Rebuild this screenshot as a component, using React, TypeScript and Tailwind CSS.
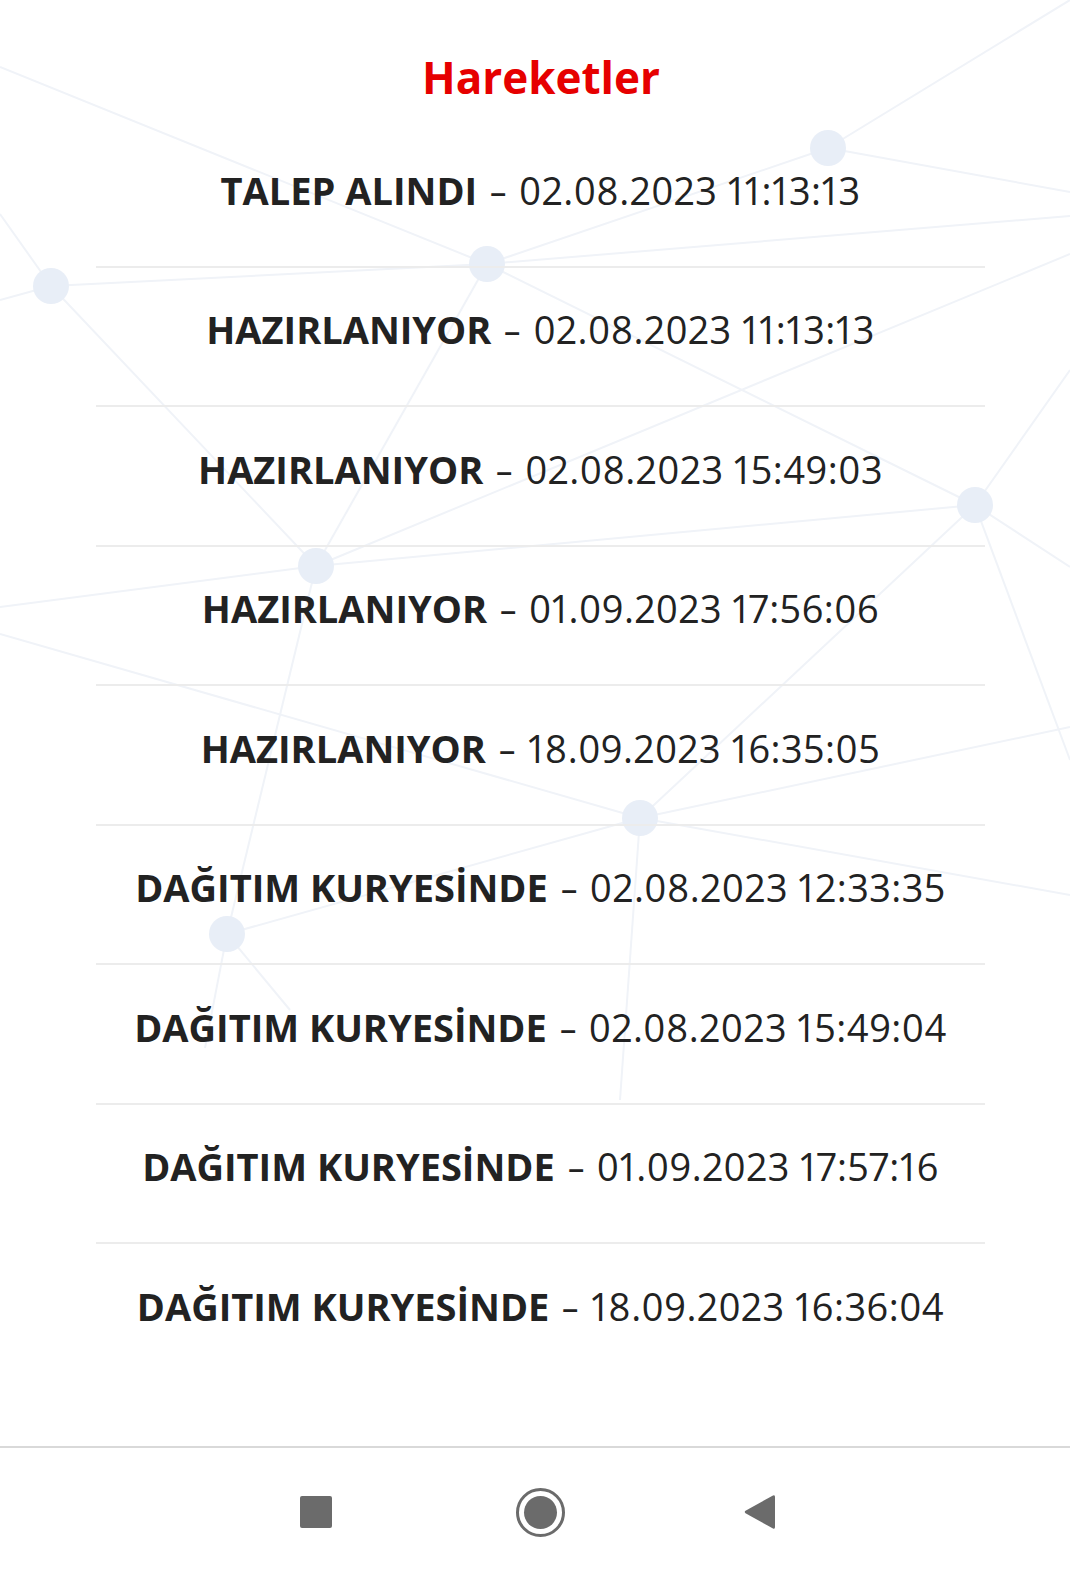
import type { ReactNode } from "react";

type Movement = { status: string; at: string };

const MOVEMENTS: Movement[] = [
  { status: "TALEP ALINDI", at: "02.08.2023 11:13:13" },
  { status: "HAZIRLANIYOR", at: "02.08.2023 11:13:13" },
  { status: "HAZIRLANIYOR", at: "02.08.2023 15:49:03" },
  { status: "HAZIRLANIYOR", at: "01.09.2023 17:56:06" },
  { status: "HAZIRLANIYOR", at: "18.09.2023 16:35:05" },
  { status: "DAĞITIM KURYESİNDE", at: "02.08.2023 12:33:35" },
  { status: "DAĞITIM KURYESİNDE", at: "02.08.2023 15:49:04" },
  { status: "DAĞITIM KURYESİNDE", at: "01.09.2023 17:57:16" },
  { status: "DAĞITIM KURYESİNDE", at: "18.09.2023 16:36:04" },
];

// faint "network" backdrop: nodes + the lines between them
const NODES: [number, number][] = [
  [51, 286],
  [487, 264],
  [828, 148],
  [975, 505],
  [316, 566],
  [640, 818],
  [227, 934],
];

const LINKS: [number, number, number, number][] = [
  [0, 67, 487, 264],
  [0, 214, 51, 286],
  [0, 300, 51, 286],
  [51, 286, 487, 264],
  [51, 286, 316, 566],
  [487, 264, 316, 566],
  [487, 264, 828, 148],
  [487, 264, 975, 505],
  [487, 264, 1070, 216],
  [828, 148, 1070, 0],
  [828, 148, 1070, 192],
  [0, 607, 316, 566],
  [316, 566, 975, 505],
  [316, 566, 1070, 254],
  [0, 634, 640, 818],
  [316, 566, 227, 934],
  [640, 818, 975, 505],
  [640, 818, 1070, 727],
  [640, 818, 1070, 895],
  [640, 818, 620, 1100],
  [227, 934, 640, 818],
  [227, 934, 205, 1048],
  [227, 934, 290, 1010],
  [975, 505, 1070, 370],
  [975, 505, 1070, 567],
  [975, 505, 1070, 760],
];

function NetworkBackdrop() {
  return (
    <svg
      className="pointer-events-none absolute inset-0 h-full w-full"
      viewBox="0 0 1070 1446"
      preserveAspectRatio="none"
      aria-hidden="true"
    >
      {LINKS.map(([x1, y1, x2, y2], i) => (
        <line key={i} x1={x1} y1={y1} x2={x2} y2={y2} stroke="#f0f3f8" strokeWidth={2} />
      ))}
      {NODES.map(([cx, cy], i) => (
        <circle key={i} cx={cx} cy={cy} r={18} fill="#e8eef7" />
      ))}
    </svg>
  );
}

function NavButton({ children }: { children: ReactNode }) {
  return <div className="flex items-center justify-center">{children}</div>;
}

export default function App() {
  return (
    <div className="flex min-h-[1576px] w-full flex-col bg-white font-['Open_Sans',sans-serif] text-[#222222]">
      <main className="relative flex-1 overflow-hidden">
        <NetworkBackdrop />
        <div className="relative pt-[55px]">
          <h1 className="pl-[12px] text-center text-[44px] font-bold leading-[44px] text-[#e60000]">
            Hareketler
          </h1>
          <ul className="ml-[96px] mr-[85px] mt-[29px]">
            {MOVEMENTS.map((m, i) => (
              <li
                key={i}
                className="border-b-2 border-[#ececec] pb-[57px] pt-[42.5px] text-center text-[38px] leading-[38px] last:border-b-0"
              >
                <span className="font-bold">{m.status}</span>{" "}
                <span className="mx-[5px] inline-block scale-x-[1.5] font-normal">-</span>{" "}
                <span className="font-normal tracking-[0.5px] proportional-nums">{m.at}</span>
              </li>
            ))}
          </ul>
        </div>
      </main>

      <nav className="flex h-[130px] items-center border-t-2 border-[#d9d9d9] bg-white pl-[300px]">
        <NavButton>
          <div className="h-[32px] w-[32px] rounded-[2px] bg-[#6b6b6b]" />
        </NavButton>
        <div className="ml-[184px]">
          <NavButton>
            <div className="flex h-[49px] w-[49px] items-center justify-center rounded-full border-[3px] border-[#6b6b6b]">
              <div className="h-[33px] w-[33px] rounded-full bg-[#6b6b6b]" />
            </div>
          </NavButton>
        </div>
        <div className="ml-[179px]">
          <NavButton>
            <svg width="31" height="36" viewBox="0 0 31 36" aria-hidden="true">
              <path
                d="M29 1.5 Q31 0.5 31 3 L31 33 Q31 35.5 29 34.5 L1.5 19.2 Q0 18 1.5 16.8 Z"
                fill="#6b6b6b"
              />
            </svg>
          </NavButton>
        </div>
      </nav>
    </div>
  );
}
